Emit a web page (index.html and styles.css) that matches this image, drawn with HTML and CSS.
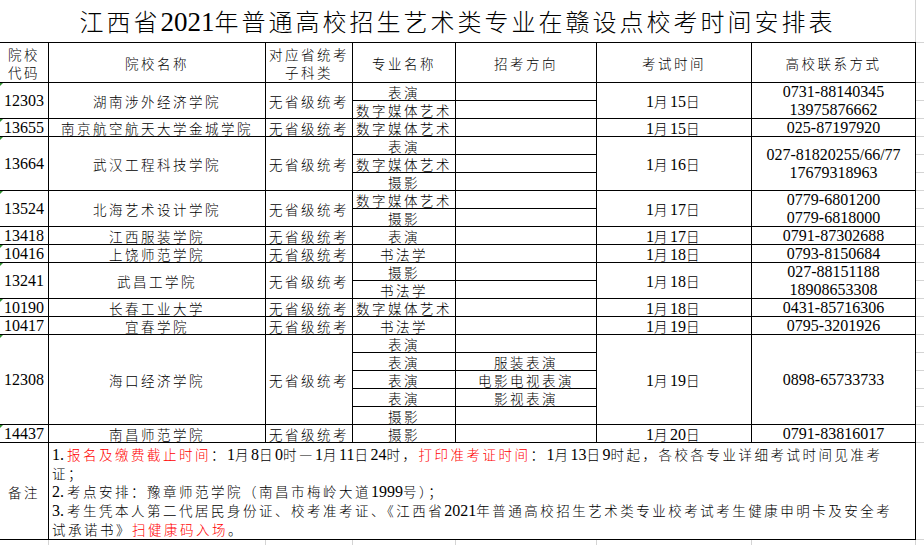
FILE: index.html
```html
<!DOCTYPE html>
<html lang="zh-CN">
<head>
<meta charset="utf-8">
<title>江西省2021年普通高校招生艺术类专业在赣设点校考时间安排表</title>
<link rel="stylesheet" href="styles.css">
</head>
<body>
<div class="page">
  <div class="title"><div>江西省<span class="tn">2021</span>年普通高校招生艺术类专业在赣设点校考时间安排表</div></div>
  <div class="sheet">
    <div class="c"><div>院校</div><div>代码</div></div>
    <div class="c"><div>院校名称</div></div>
    <div class="c"><div>对应省统考</div><div>子科类</div></div>
    <div class="c"><div>专业名称</div></div>
    <div class="c"><div>招考方向</div></div>
    <div class="c"><div>考试时间</div></div>
    <div class="c"><div>高校联系方式</div></div>

    <div class="c r2 tri n"><div>12303</div></div>
    <div class="c r2"><div>湖南涉外经济学院</div></div>
    <div class="c r2"><div>无省级统考</div></div>
    <div class="c"><div>表演</div></div>
    <div class="c"></div>
    <div class="c r2"><div><span class="n">1</span>月<span class="n">15</span>日</div></div>
    <div class="c r2 n"><div>0731-88140345</div><div>13975876662</div></div>
    <div class="c"><div>数字媒体艺术</div></div>
    <div class="c"></div>

    <div class="c tri n"><div>13655</div></div>
    <div class="c"><div>南京航空航天大学金城学院</div></div>
    <div class="c"><div>无省级统考</div></div>
    <div class="c"><div>数字媒体艺术</div></div>
    <div class="c"></div>
    <div class="c"><div><span class="n">1</span>月<span class="n">15</span>日</div></div>
    <div class="c n"><div>025-87197920</div></div>

    <div class="c r3 tri n"><div>13664</div></div>
    <div class="c r3"><div>武汉工程科技学院</div></div>
    <div class="c r3"><div>无省级统考</div></div>
    <div class="c"><div>表演</div></div>
    <div class="c"></div>
    <div class="c r3"><div><span class="n">1</span>月<span class="n">16</span>日</div></div>
    <div class="c r3 n"><div>027-81820255/66/77</div><div>17679318963</div></div>
    <div class="c"><div>数字媒体艺术</div></div>
    <div class="c"></div>
    <div class="c"><div>摄影</div></div>
    <div class="c"></div>

    <div class="c r2 tri n"><div>13524</div></div>
    <div class="c r2"><div>北海艺术设计学院</div></div>
    <div class="c r2"><div>无省级统考</div></div>
    <div class="c"><div>数字媒体艺术</div></div>
    <div class="c"></div>
    <div class="c r2"><div><span class="n">1</span>月<span class="n">17</span>日</div></div>
    <div class="c r2 n"><div>0779-6801200</div><div>0779-6818000</div></div>
    <div class="c"><div>摄影</div></div>
    <div class="c"></div>

    <div class="c n"><div>13418</div></div>
    <div class="c"><div>江西服装学院</div></div>
    <div class="c"><div>无省级统考</div></div>
    <div class="c"><div>表演</div></div>
    <div class="c"></div>
    <div class="c"><div><span class="n">1</span>月<span class="n">17</span>日</div></div>
    <div class="c n"><div>0791-87302688</div></div>

    <div class="c tri n"><div>10416</div></div>
    <div class="c"><div>上饶师范学院</div></div>
    <div class="c"><div>无省级统考</div></div>
    <div class="c"><div>书法学</div></div>
    <div class="c"></div>
    <div class="c"><div><span class="n">1</span>月<span class="n">18</span>日</div></div>
    <div class="c n"><div>0793-8150684</div></div>

    <div class="c r2 tri n"><div>13241</div></div>
    <div class="c r2"><div>武昌工学院</div></div>
    <div class="c r2"><div>无省级统考</div></div>
    <div class="c"><div>摄影</div></div>
    <div class="c"></div>
    <div class="c r2"><div><span class="n">1</span>月<span class="n">18</span>日</div></div>
    <div class="c r2 n"><div>027-88151188</div><div>18908653308</div></div>
    <div class="c"><div>书法学</div></div>
    <div class="c"></div>

    <div class="c tri n"><div>10190</div></div>
    <div class="c"><div>长春工业大学</div></div>
    <div class="c"><div>无省级统考</div></div>
    <div class="c"><div>数字媒体艺术</div></div>
    <div class="c"></div>
    <div class="c"><div><span class="n">1</span>月<span class="n">18</span>日</div></div>
    <div class="c n"><div>0431-85716306</div></div>

    <div class="c n"><div>10417</div></div>
    <div class="c"><div>宜春学院</div></div>
    <div class="c"><div>无省级统考</div></div>
    <div class="c"><div>书法学</div></div>
    <div class="c"></div>
    <div class="c"><div><span class="n">1</span>月<span class="n">19</span>日</div></div>
    <div class="c n"><div>0795-3201926</div></div>

    <div class="c r5 tri n"><div>12308</div></div>
    <div class="c r5"><div>海口经济学院</div></div>
    <div class="c r5"><div>无省级统考</div></div>
    <div class="c"><div>表演</div></div>
    <div class="c"></div>
    <div class="c r5"><div><span class="n">1</span>月<span class="n">19</span>日</div></div>
    <div class="c r5 n"><div>0898-65733733</div></div>
    <div class="c"><div>表演</div></div>
    <div class="c"><div>服装表演</div></div>
    <div class="c"><div>表演</div></div>
    <div class="c"><div>电影电视表演</div></div>
    <div class="c"><div>表演</div></div>
    <div class="c"><div>影视表演</div></div>
    <div class="c"><div>摄影</div></div>
    <div class="c"></div>

    <div class="c tri n"><div>14437</div></div>
    <div class="c"><div>南昌师范学院</div></div>
    <div class="c"><div>无省级统考</div></div>
    <div class="c"><div>摄影</div></div>
    <div class="c"></div>
    <div class="c"><div><span class="n">1</span>月<span class="n">20</span>日</div></div>
    <div class="c n"><div>0791-83816017</div></div>

    <div class="c"><div>备注</div></div>
    <div class="c notes">
      <div><span class="n ln">1.</span><span class="red">报名及缴费截止时间</span>：<span class="n">1</span>月<span class="n">8</span>日<span class="n">0</span>时—<span class="n">1</span>月<span class="n">11</span>日<span class="n">24</span>时，<span class="red">打印准考证时间</span>：<span class="n">1</span>月<span class="n">13</span>日<span class="n">9</span>时起，各校各专业详细考试时间见准考</div>
      <div>证；</div>
      <div><span class="n ln">2.</span>考点安排：豫章师范学院（南昌市梅岭大道<span class="n">1999</span>号）；</div>
      <div><span class="n ln">3.</span>考生凭本人第二代居民身份证、校考准考证、《江西省<span class="n">2021</span>年普通高校招生艺术类专业校考试考生健康申明卡及安全考</div>
      <div>试承诺书》<span class="red">扫健康码入场</span>。</div>
    </div>
  </div>
  <div class="foot">
    <div></div><div></div><div></div><div></div><div></div><div></div><div></div>
  </div>
</div>
<div class="strip"></div>
</body>
</html>
```
FILE: styles.css
```css
html, body {
  margin: 0;
  padding: 0;
  background: #fff;
}

body {
  display: flex;
  width: 924px;
  height: 545px;
  overflow: hidden;
  font-family: "Noto Sans CJK SC", sans-serif;
  font-weight: 300;
  color: #000;
}

.page {
  width: 916px;
  display: flex;
  flex-direction: column;
}

.title {
  height: 42px;
  width: 915px;
  border-right: 1px solid #d4d4d4;
  display: flex;
  align-items: center;
  justify-content: center;
  font-size: 24px;
  letter-spacing: 3px;
  line-height: 42px;
  white-space: nowrap;
}

.tn {
  font-family: "Liberation Serif", serif;
  font-size: 27px;
  letter-spacing: 0;
  font-weight: 400;
}

.sheet {
  display: grid;
  grid-template-columns: 48px 216px 86px 102px 140px 154px 163px;
  grid-template-rows: 39px repeat(20, 17px) 96px;
  gap: 1px;
  background: #000;
  padding: 1px 1px 1px 0;
  font-size: 13.5px;
  letter-spacing: 2.5px;
}

.c {
  background: #fff;
  display: flex;
  flex-direction: column;
  align-items: center;
  justify-content: center;
  text-align: center;
  line-height: 18px;
  white-space: nowrap;
  position: relative;
  padding-top: 1px;
  box-sizing: border-box;
}

.n {
  font-family: "Liberation Serif", serif;
  font-size: 16px;
  letter-spacing: 0;
  font-weight: 400;
}

.ln {
  padding-right: 3px;
}

.r2 { grid-row: span 2; }
.r3 { grid-row: span 3; }
.r5 { grid-row: span 5; }

.tri::before {
  content: "";
  position: absolute;
  left: 0;
  top: 0;
  border-top: 3px solid #2f8f2f;
  border-right: 3px solid transparent;
}

.notes {
  grid-column: span 6;
  align-items: flex-start;
  text-align: left;
  padding-left: 3px;
  line-height: 18px;
}

.red {
  color: #ff0000;
}

.foot {
  display: grid;
  grid-template-columns: 48px 216px 86px 102px 140px 154px 163px;
  gap: 1px;
  height: 5px;
  background: #d4d4d4;
  padding-right: 1px;
}

.foot div {
  background: #fff;
}

.strip {
  width: 8px;
  height: 545px;
  background:
    linear-gradient(#d4d4d4, #d4d4d4) 0 42px / 100% 1px no-repeat,
    linear-gradient(#d4d4d4, #d4d4d4) 0 539px / 100% 1px no-repeat,
    repeating-linear-gradient(to bottom, #d4d4d4 0 1px, transparent 1px 18px) 0 82px / 100% 361px no-repeat;
}
```
